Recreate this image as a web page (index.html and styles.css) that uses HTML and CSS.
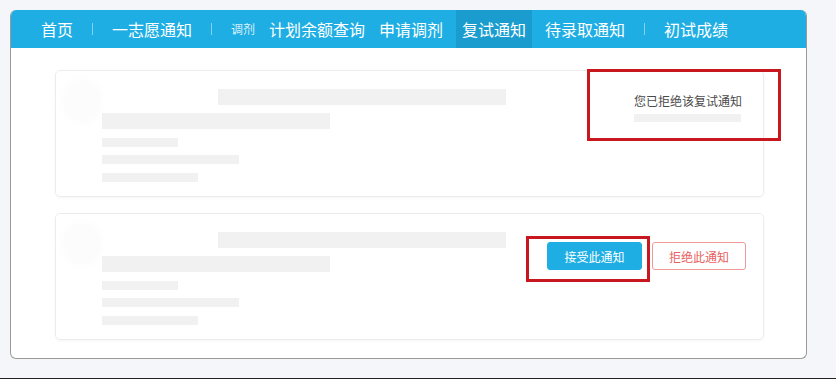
FILE: index.html
```html
<!DOCTYPE html>
<html lang="zh-CN">
<head>
<meta charset="utf-8">
<title>复试通知</title>
<link rel="stylesheet" href="styles.css">
</head>
<body>
<div class="page">
  <div class="panel">
    <nav class="nav">
      <a class="nav-item">首页</a>
      <span class="sep"></span>
      <a class="nav-item">一志愿通知</a>
      <span class="sep"></span>
      <a class="nav-item small">调剂</a>
      <a class="nav-item">计划余额查询</a>
      <a class="nav-item">申请调剂</a>
      <a class="nav-item active">复试通知</a>
      <a class="nav-item">待录取通知</a>
      <span class="sep"></span>
      <a class="nav-item">初试成绩</a>
    </nav>
    <div class="panel-body">
      <div class="card">
        <div class="avatar"></div>
        <div class="skeleton">
          <div class="bar b1"></div>
          <div class="bar b2"></div>
          <div class="bar b3"></div>
          <div class="bar b4"></div>
          <div class="bar b5"></div>
        </div>
        <div class="status">
          <div class="status-text">您已拒绝该复试通知</div>
          <div class="bar b6"></div>
        </div>
        <div class="mark mark-1"></div>
      </div>
      <div class="card">
        <div class="avatar"></div>
        <div class="skeleton">
          <div class="bar b1"></div>
          <div class="bar b2"></div>
          <div class="bar b3"></div>
          <div class="bar b4"></div>
          <div class="bar b5"></div>
        </div>
        <div class="actions">
          <button class="btn btn-accept">接受此通知</button>
          <button class="btn btn-reject">拒绝此通知</button>
        </div>
        <div class="mark mark-2"></div>
      </div>
    </div>
  </div>
</div>
</body>
</html>
```
FILE: styles.css
```css
html, body {
  margin: 0;
  padding: 0;
}
body {
  background: #f4f6fa;
  font-family: "Noto Sans CJK SC", "Noto Sans", sans-serif;
  height: 379px;
  box-sizing: border-box;
  border-bottom: 1px solid #222;
  overflow: hidden;
}
.page {
  padding: 10px 29px 0 10px;
}
.panel {
  width: 797px;
  box-sizing: border-box;
  background: #fff;
  border: 1px solid #9a9a9a;
  border-top: none;
  border-radius: 6px;
  overflow: hidden;
}
.nav {
  display: flex;
  align-items: center;
  height: 38px;
  background: #1eaee3;
  padding-left: 24px;
  margin: 0 -1px;
}
.nav-item {
  color: #fff;
  font-size: 16px;
  line-height: 38px;
  padding: 0 7px;
  white-space: nowrap;
}
.nav-item.small {
  font-size: 12px;
  color: rgba(255, 255, 255, 0.85);
}
.nav-item.active {
  background: #1a9dce;
  padding: 0 6px;
  margin: 0 6px;
}
.sep {
  width: 1px;
  height: 12px;
  margin: 0 12px;
  background: rgba(255, 255, 255, 0.45);
}
.panel-body {
  padding: 22px 42px 18px 44px;
  display: flex;
  flex-direction: column;
  gap: 16px;
}
.card {
  position: relative;
  display: flex;
  height: 127px;
  box-sizing: border-box;
  border: 1px solid #ececec;
  border-radius: 5px;
  box-shadow: 0 1px 3px rgba(0, 0, 0, 0.04);
  padding: 18px 0 0 8px;
}
.avatar {
  width: 36px;
  height: 40px;
  margin-top: -8px;
  border-radius: 50%;
  background: #fcfcfc;
  box-shadow: 0 0 6px 4px #fdfdfd;
}
.skeleton {
  margin-left: 2px;
  display: flex;
  flex-direction: column;
  flex: 1;
}
.bar {
  background: #f1f1f1;
}
.b1 { width: 288px; height: 16px; margin-left: 116px; }
.b2 { width: 228px; height: 16px; margin-top: 8px; }
.b3 { width: 76px; height: 9px; margin-top: 9px; }
.b4 { width: 137px; height: 9px; margin-top: 8px; }
.b5 { width: 96px; height: 9px; margin-top: 9px; }
.status {
  padding: 5px 21px 0 0;
  width: 108px;
}
.status-text {
  font-size: 12px;
  line-height: 14px;
  color: #4a4a4a;
  white-space: nowrap;
}
.b6 { width: 107px; height: 8px; margin-top: 6px; }
.actions {
  display: flex;
  gap: 10px;
  padding: 10px 17px 0 0;
  align-items: flex-start;
}
.btn {
  width: 95px;
  height: 28px;
  box-sizing: border-box;
  border-radius: 3px;
  font-family: "Noto Sans CJK SC", "Noto Sans", sans-serif;
  font-size: 12px;
  padding: 0;
  cursor: pointer;
}
.btn-accept {
  background: #1eaee3;
  border: 1px solid #1eaee3;
  color: #fff;
}
.btn-reject {
  width: 94px;
  background: #fff;
  border: 1px solid #ee9a9a;
  color: #e86060;
}
.mark {
  position: absolute;
  border: 3px solid #c8171e;
  box-sizing: border-box;
}
.mark-1 {
  left: 531px;
  top: -2px;
  width: 194px;
  height: 72px;
}
.mark-2 {
  left: 470px;
  top: 22px;
  width: 124px;
  height: 46px;
}
```
